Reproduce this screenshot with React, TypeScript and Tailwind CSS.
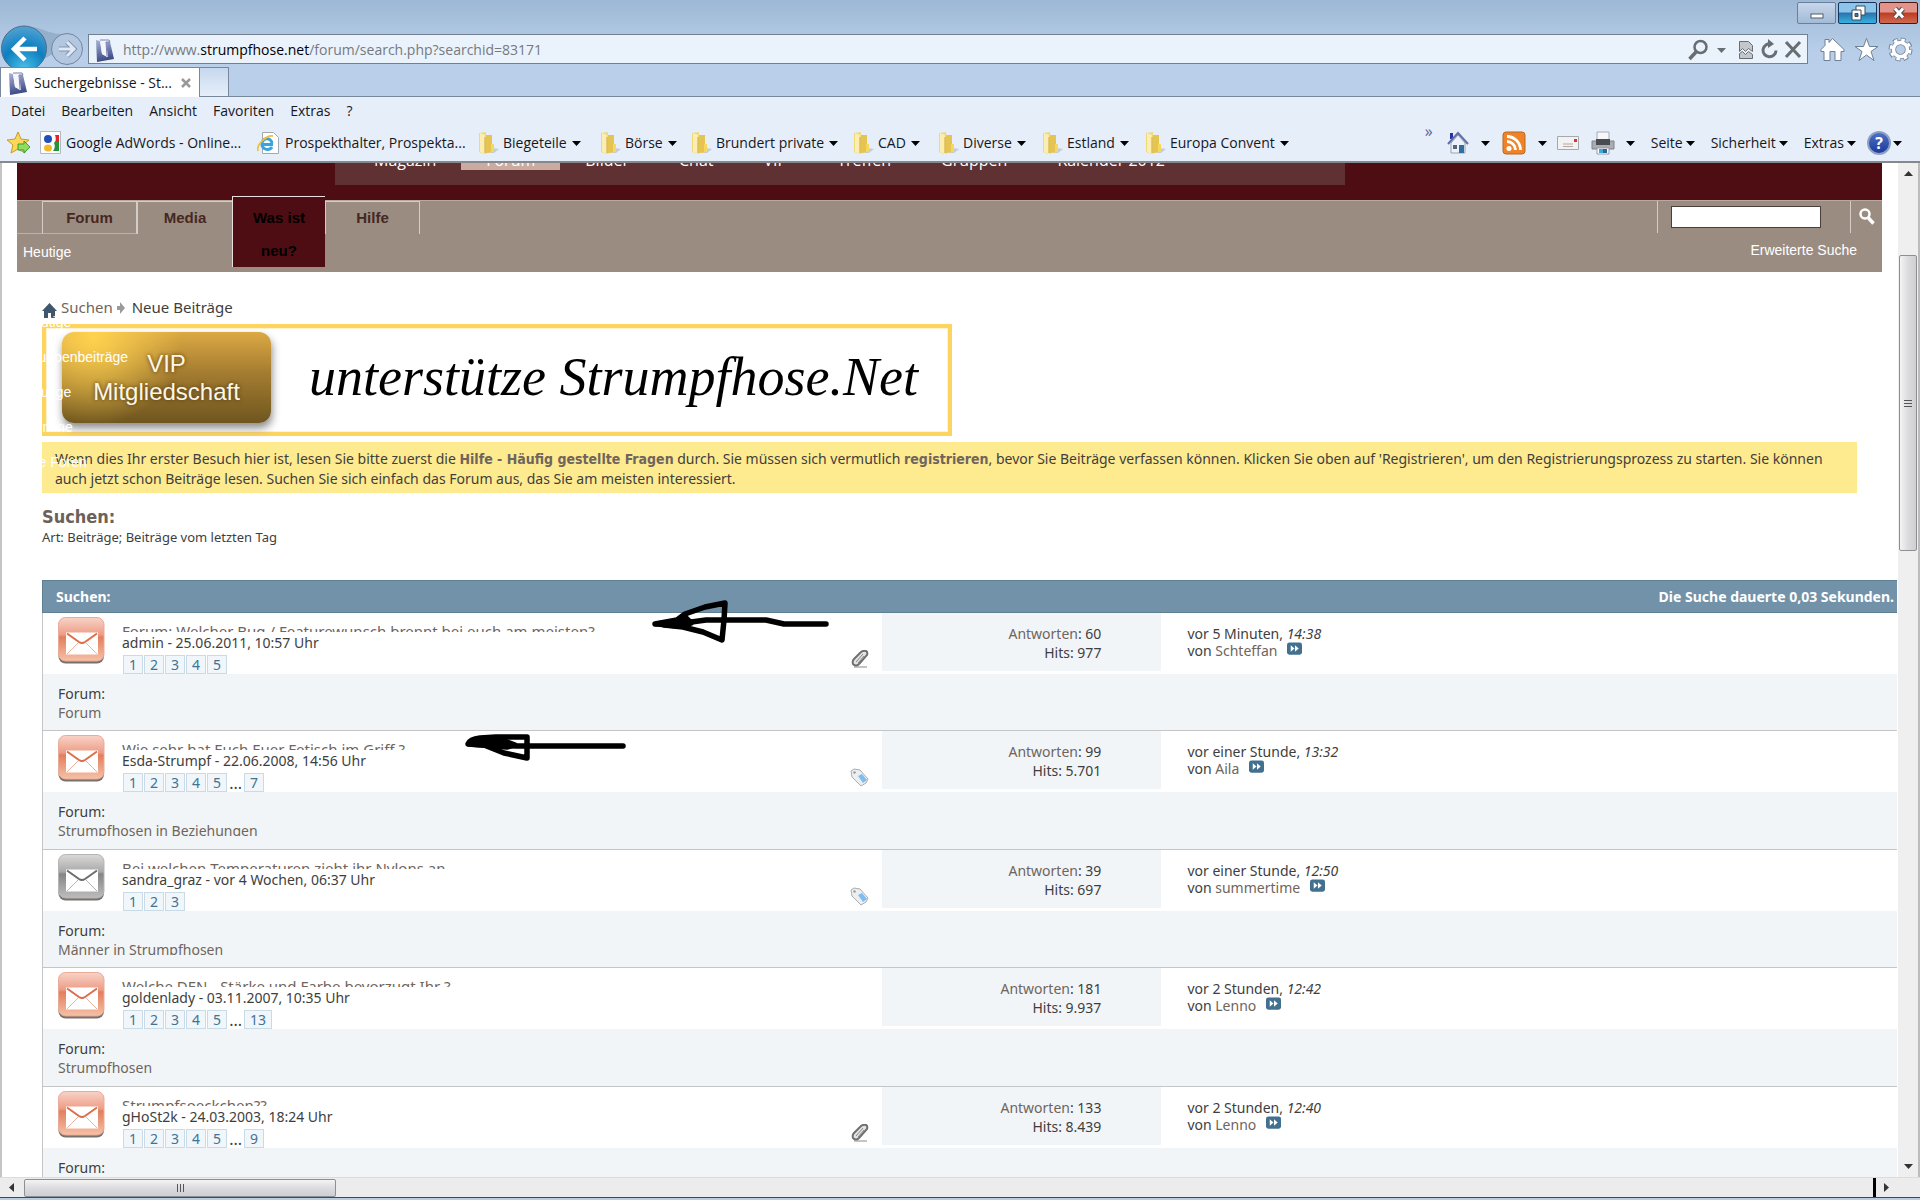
import type { ReactNode } from 'react'

type Thread = {
  title: string
  meta: string
  pages: string[]
  lastPage?: string
  read?: boolean
  marker?: 'clip' | 'tag'
  replies: string
  hits: string
  ago: string
  time: string
  by: string
  forum: string
}

const threads: Thread[] = [
  {
    title: 'Forum: Welcher Bug / Featurewunsch brennt bei euch am meisten?',
    meta: 'admin - 25.06.2011, 10:57 Uhr',
    pages: ['1', '2', '3', '4', '5'],
    marker: 'clip',
    replies: '60',
    hits: '977',
    ago: 'vor 5 Minuten,',
    time: '14:38',
    by: 'Schteffan',
    forum: 'Forum',
  },
  {
    title: 'Wie sehr hat Euch Euer Fetisch im Griff ?',
    meta: 'Esda-Strumpf - 22.06.2008, 14:56 Uhr',
    pages: ['1', '2', '3', '4', '5'],
    lastPage: '7',
    marker: 'tag',
    replies: '99',
    hits: '5.701',
    ago: 'vor einer Stunde,',
    time: '13:32',
    by: 'Aila',
    forum: 'Strumpfhosen in Beziehungen',
  },
  {
    title: 'Bei welchen Temperaturen zieht ihr Nylons an',
    meta: 'sandra_graz - vor 4 Wochen, 06:37 Uhr',
    pages: ['1', '2', '3'],
    read: true,
    marker: 'tag',
    replies: '39',
    hits: '697',
    ago: 'vor einer Stunde,',
    time: '12:50',
    by: 'summertime',
    forum: 'Männer in Strumpfhosen',
  },
  {
    title: 'Welche DEN - Stärke und Farbe bevorzugt Ihr ?',
    meta: 'goldenlady - 03.11.2007, 10:35 Uhr',
    pages: ['1', '2', '3', '4', '5'],
    lastPage: '13',
    replies: '181',
    hits: '9.937',
    ago: 'vor 2 Stunden,',
    time: '12:42',
    by: 'Lenno',
    forum: 'Strumpfhosen',
  },
  {
    title: 'Strumpfsoeckchen??',
    meta: 'gHoSt2k - 24.03.2003, 18:24 Uhr',
    pages: ['1', '2', '3', '4', '5'],
    lastPage: '9',
    marker: 'clip',
    replies: '133',
    hits: '8.439',
    ago: 'vor 2 Stunden,',
    time: '12:40',
    by: 'Lenno',
    forum: 'Strumpfhosen',
  },
]

const folders = [
  { name: 'Biegeteile', width: 'w-[122px]' },
  { name: 'Börse', width: 'w-[91px]' },
  { name: 'Brundert private', width: 'w-[162px]' },
  { name: 'CAD', width: 'w-[85px]' },
  { name: 'Diverse', width: 'w-[104px]' },
  { name: 'Estland', width: 'w-[103px]' },
  { name: 'Europa Convent', width: 'w-[150px]' },
]

const siteLinks = ['Magazin', 'Forum', 'Bilder', 'Chat', 'VIP', 'Treffen', 'Gruppen', 'Kalender 2012']
const subLinks = ['Heutige Beiträge', 'Heutige Gruppenbeiträge', 'Heutige Termine', 'Alle Foren']

function Caret() {
  return (
    <svg className="h-[5px] w-[9px] shrink-0" viewBox="0 0 9 5" aria-hidden="true">
      <path d="M0 0h9L4.500 5z" fill="#000" />
    </svg>
  )
}

function SiteIcon() {
  return (
    <svg className="h-6 w-5 shrink-0" viewBox="0 0 20 24" aria-hidden="true">
      <defs>
        <linearGradient id="site" x1="0" y1="0" x2="0.200" y2="1">
          <stop offset="0" stopColor="#aab3d8" />
          <stop offset="1" stopColor="#3c4a86" />
        </linearGradient>
      </defs>
      <path d="M1 2l4 1 2 13 5 3-2-15h5l4 17-17 3z" fill="url(#site)" />
      <path d="M5 2l9-1 1 2-4 1 2 15-6-3z" fill="#f4f6fc" />
      <path d="M5 2h9l1 2h-4l1 14" fill="none" stroke="#7a84b4" />
    </svg>
  )
}

function FolderIcon() {
  return (
    <svg className="h-6 w-[21px] shrink-0" viewBox="0 0 21 24" aria-hidden="true">
      <path d="M14 17l7 1-5 4H8z" fill="#aeb6c4" opacity="0.600" />
      <path d="M1 2l7-1v3l6 0v17l-8 2-5-2z" fill="#f0d978" />
      <path d="M8 4h6v17l-6 1z" fill="#e6c452" />
      <path d="M2 2l5 2v19l-5-2z" fill="#fbeeb0" />
      <path d="M7 6v16" stroke="#c9a63f" />
      <path d="M13 13h3v8h-3z" fill="#f6d95c" />
    </svg>
  )
}

function WindowButtons() {
  return (
    <div className="flex gap-0.5 pr-0.5">
      <button aria-label="Minimieren" className="flex h-[22px] w-[39px] items-center justify-center rounded-xs border border-[#67809f] bg-linear-to-b from-[#c8d7ea] via-[#b4c8e0] via-50% to-[#a3bbd7]">
        <svg className="h-5 w-5" viewBox="0 0 20 20">
          <rect x="4" y="11" width="12" height="4" fill="#fff" stroke="#525c6b" />
        </svg>
      </button>
      <button aria-label="Verkleinern" className="flex h-[22px] w-[39px] items-center justify-center rounded-xs border border-[#12365c] bg-linear-to-b from-[#8cc4ea] from-45% via-[#2a72ad] via-50% to-[#35b3e0]">
        <svg className="h-5 w-5" viewBox="0 0 20 20">
          <path d="M8 3h9v9h-9z" fill="#fff" stroke="#3b4a5e" />
          <path d="M4 7h9v10h-9z" fill="#fff" stroke="#3b4a5e" />
          <path d="M7 10.500h3v3h-3z" fill="#3a7cae" stroke="#3b4a5e" />
        </svg>
      </button>
      <button aria-label="Schließen" className="flex h-[22px] w-[39px] items-center justify-center rounded-xs border border-[#4b1512] bg-linear-to-b from-[#e2948a] from-45% via-[#bd3a22] via-50% to-[#cf6a50]">
        <svg className="h-5 w-5" viewBox="0 0 20 20">
          <path d="M6 5.500l8 9M14 5.500l-8 9" stroke="#4d4d4d" strokeWidth="5" />
          <path d="M6 5.500l8 9M14 5.500l-8 9" stroke="#fff" strokeWidth="3" />
        </svg>
      </button>
    </div>
  )
}

function AddressRow() {
  return (
    <div className="flex h-[42px] items-start">
      <button aria-label="Zurück und Vorwärts" className="h-[42px] w-[88px] shrink-0">
        <svg className="h-[42px] w-[88px]" viewBox="0 0 88 42">
          <defs>
            <radialGradient id="back" cx="0.500" cy="0.950" r="0.900">
              <stop offset="0" stopColor="#4cc0e8" />
              <stop offset="0.550" stopColor="#0d7fc0" />
              <stop offset="1" stopColor="#4b9fd0" />
            </radialGradient>
          </defs>
          <path d="M30 2c14 0 20 10 40 6l-12 18-14 8z" fill="#8fa9c6" opacity="0.800" />
          <circle cx="67" cy="24" r="15.500" fill="#b3c7e0" stroke="#72869f" />
          <path d="M59 24h14M67 17l7 7-7 7" fill="none" stroke="#8194ac" strokeWidth="5" />
          <path d="M59 24h14M67 17l7 7-7 7" fill="none" stroke="#dfe9f5" strokeWidth="3" />
          <circle cx="24" cy="23.500" r="22.500" fill="url(#back)" stroke="#4d6d8c" />
          <path d="M37 24H15M25 13L14 24l11 11" fill="none" stroke="#fff" strokeWidth="4.500" />
        </svg>
      </button>
      <div className="mt-[9px] flex h-[30px] min-w-0 flex-1 items-center border border-[#72808f] bg-[#eaf2fb] pl-[6px] pr-1 pt-px">
        <SiteIcon />
        <p className="ml-2 flex-1 text-sm text-[#757a80]">
          http://www.<span className="text-black">strumpfhose.net</span>/forum/search.php?searchid=83171
        </p>
        <svg className="h-6 w-[115px]" viewBox="0 0 115 24" fill="none" stroke="#686d72" aria-hidden="true">
          <circle cx="12.500" cy="9" r="6" strokeWidth="2.500" />
          <path d="M8 14l-6.500 7" strokeWidth="3.500" />
          <path d="M29 10h9l-4.500 5z" fill="#686d72" stroke="none" />
          <path d="M51.500 3.500h9l4 4v6l-4-3-3 3-3-3-3 3z" fill="#c3c7cb" />
          <path d="M51.500 20.500v-5l3-2 3 3 3-3 4 3v4z" fill="#c3c7cb" />
          <path d="M88 12.500a6.500 6.500 0 1 1-5-6.500" strokeWidth="3" />
          <path d="M80 1l6 5-6 4z" fill="#686d72" stroke="none" />
          <path d="M98 4l14 15M112 4L98 19" strokeWidth="3" />
        </svg>
      </div>
      <div className="mt-3 flex gap-[9px] pl-3 pr-[7px]">
        <svg className="h-[25px] w-[25px]" viewBox="0 0 25 24" fill="#fff" stroke="#6f7f94" aria-hidden="true">
          <path d="M1 12L5 8V2h4v3l3.500-4L24 12v2h-3v9h-6v-9h-5v9H4v-9H1z" />
        </svg>
        <svg className="h-[25px] w-[25px]" viewBox="0 0 25 24" fill="#fff" stroke="#6f7f94" aria-hidden="true">
          <path d="M12.500 1l3 8H24l-7 5 3 9-7.500-5.500L5 23l3-9-7-5h8.500z" />
        </svg>
        <svg className="h-[25px] w-[25px]" viewBox="0 0 25 24" aria-hidden="true">
          <circle cx="12.500" cy="12" r="9.500" fill="none" stroke="#6f7f94" strokeWidth="5" strokeDasharray="4.500 2.960" />
          <circle cx="12.500" cy="12" r="7" fill="none" stroke="#6f7f94" strokeWidth="5" />
          <circle cx="12.500" cy="12" r="9.500" fill="none" stroke="#fff" strokeWidth="3" strokeDasharray="3.500 3.960" strokeDashoffset="-0.500" />
          <circle cx="12.500" cy="12" r="7" fill="none" stroke="#fff" strokeWidth="3.500" />
        </svg>
      </div>
    </div>
  )
}

function BrowserHeader() {
  return (
    <header className="shrink-0 font-['Open_Sans','Noto_Sans',sans-serif] text-sm text-[#16181c]">
      <div className="bg-linear-to-b from-[#9db8d5] via-[#b9cfe9] via-55% to-[#bad0ea]">
        <div className="flex h-[25px] justify-end pt-0.5">
          <WindowButtons />
        </div>
        <AddressRow />
        <div className="flex h-[30px] border-b border-[#78889b]">
          <div className="flex h-[30px] w-[200px] items-center border border-b-0 border-[#78889b] bg-white pl-[7px]">
            <SiteIcon />
            <span className="ml-1.5 flex-1 whitespace-nowrap">Suchergebnisse - St...</span>
            <button aria-label="Tab schließen" className="mr-2">
              <svg className="h-[10px] w-[10px]" viewBox="0 0 10 10">
                <path d="M1 1l8 8M9 1L1 9" stroke="#999" strokeWidth="2.500" />
              </svg>
            </button>
          </div>
          <button aria-label="Neuer Tab" className="w-[29px] border border-b-0 border-l-0 border-[#78889b] bg-linear-to-b from-[#c6d8ee] to-[#e6effa]" />
        </div>
      </div>
      <div className="h-[66px] border-b-2 border-[#85888d] bg-[#e6eefa]">
        <nav className="flex h-[28px] items-center gap-4 px-[11px]">
          {['Datei', 'Bearbeiten', 'Ansicht', 'Favoriten', 'Extras', '?'].map((m) => (
            <button key={m}>{m}</button>
          ))}
        </nav>
        <div className="flex h-9 items-center whitespace-nowrap pl-[7px]">
          <svg className="h-6 w-6 shrink-0" viewBox="0 0 24 24" aria-hidden="true">
            <path d="M11 1l3 7 8 1-6 5 2 8-7-4-7 4 2-8-6-5 8-1z" fill="#fbd85a" stroke="#c99a2a" />
            <path d="M11 13h6v-3l6 6-6 6v-3h-6z" fill="#8fdc5f" stroke="#3f9a35" />
          </svg>
          <a href="#" className="ml-[9px] flex w-[217px] items-center gap-[5px]">
            <svg className="h-6 w-[21px] shrink-0" viewBox="0 0 21 24" aria-hidden="true">
              <path d="M.5.500h20v22H.5z" fill="#fff" stroke="#b5b9bf" />
              <path d="M11 4h8v7h-8z" fill="#e0252b" />
              <path d="M12 11h7v9h-8z" fill="#24933a" />
              <path d="M11 4h4q2 5-1 8 2 4-1 8h-5z" fill="#fff" />
              <ellipse cx="8" cy="8" rx="4" ry="4" fill="#1f4fb8" />
              <ellipse cx="8" cy="17" rx="4" ry="3.500" fill="#f2b92b" />
            </svg>
            Google AdWords - Online...
          </a>
          <a href="#" className="flex w-[221px] items-center gap-[6px]">
            <svg className="h-6 w-[22px] shrink-0" viewBox="0 0 22 24" aria-hidden="true">
              <path d="M5.500 1.500h11l5 5v16h-16z" fill="#fff" stroke="#a4a8ae" />
              <path d="M16 13.500H5a5 5 0 1 1 10-1.500M15 16a5.500 5.500 0 0 1-10-2" fill="none" stroke="#38a3dd" strokeWidth="3" />
              <path d="M1 20C-1 14 9 4 16 5" fill="none" stroke="#f0c03c" strokeWidth="1.800" />
            </svg>
            Prospekthalter, Prospekta...
          </a>
          {folders.map((f) => (
            <button key={f.name} className={`flex shrink-0 items-center ${f.width}`}>
              <FolderIcon />
              <span className="ml-1 mr-[5px]">{f.name}</span>
              <Caret />
            </button>
          ))}
          <span className="mb-6 ml-auto mr-[14px] text-base leading-4 text-[#5a6190]">»</span>
          <CommandBar />
        </div>
      </div>
    </header>
  )
}

function CommandBar() {
  return (
    <div className="flex items-center pr-[18px]">
      <button aria-label="Startseite" className="flex items-center gap-3">
        <svg className="h-6 w-[22px]" viewBox="0 0 22 24" aria-hidden="true">
          <path d="M3 2h3v6H3z" fill="#2533a8" />
          <path d="M4 12l7-8 7 8v10H4z" fill="#eef1f7" stroke="#9aa3b5" />
          <path d="M1 13L11 2l10 11" fill="none" stroke="#5f6fa8" strokeWidth="2" />
          <path d="M12 14h5v8h-5z" fill="#2f6f9f" />
          <path d="M6 14h4v4H6z" fill="#56647c" />
        </svg>
        <Caret />
      </button>
      <button aria-label="Feeds" className="ml-3 flex items-center gap-3">
        <svg className="h-6 w-6" viewBox="0 0 24 24" aria-hidden="true">
          <rect x="1" y="1" width="22" height="22" rx="3" fill="#ee8427" stroke="#b9681f" />
          <circle cx="7" cy="17.500" r="2.500" fill="#fff" />
          <path d="M5 10.500a8.500 8.500 0 0 1 8.500 8.500M5 5.500A13.500 13.500 0 0 1 18.500 19" fill="none" stroke="#fff" strokeWidth="2.800" />
        </svg>
        <Caret />
      </button>
      <button aria-label="E-Mail" className="ml-[10px]">
        <svg className="h-[18px] w-[22px]" viewBox="0 0 22 18" aria-hidden="true">
          <path d="M.5 2.500h21v13H.5z" fill="#f2f2f2" stroke="#a6a8ab" />
          <path d="M17 5h3v3h-3z" fill="#d5323a" />
          <path d="M6 10h10M6 12.500h10" stroke="#b3a9a4" />
        </svg>
      </button>
      <button aria-label="Drucken" className="ml-3 flex items-center gap-[11px]">
        <svg className="h-6 w-6" viewBox="0 0 24 24" aria-hidden="true">
          <path d="M6 1h12v9H6z" fill="#f7f7f7" stroke="#aab" />
          <path d="M1 10h22v8H1z" fill="#a9adb2" stroke="#7d8288" />
          <path d="M5 8h14v6H5z" fill="#484c52" />
          <path d="M6 17h12v6H6z" fill="#fff" stroke="#99a" />
          <path d="M8 18h4v4H8z" fill="#3fa9d8" />
          <path d="M12 18h4v4h-4z" fill="#276c8c" />
        </svg>
        <Caret />
      </button>
      {['Seite', 'Sicherheit', 'Extras'].map((m) => (
        <button key={m} className="ml-4 flex items-center gap-[3px]">
          {m}
          <Caret />
        </button>
      ))}
      <button aria-label="Hilfe" className="ml-[11px] flex items-center gap-0.5">
        <span className="flex h-6 w-6 items-center justify-center rounded-full border-2 border-[#8ea0c4] bg-linear-to-b from-[#4d6fc4] to-[#1b3c9c] text-base font-bold leading-5 text-white">?</span>
        <Caret />
      </button>
    </div>
  )
}

function SiteNav() {
  return (
    <div className="ml-[15px] mr-4">
      <div className="h-[37px] bg-[#4e0d12] pl-[318px]">
        <nav className="flex h-[22px] w-[1010px] bg-[#5f3133] pl-[14px] font-['Open_Sans','Noto_Sans',sans-serif] text-base leading-5 text-white">
          {siteLinks.map((l) => (
            <a key={l} href="#" className={`flex h-[7px] items-end overflow-hidden whitespace-nowrap px-[25px] ${l === 'Forum' ? 'bg-[#cbaa9f]' : ''}`}>
              {l}
            </a>
          ))}
        </nav>
      </div>
      <div className="flex h-[72px] items-start border-t border-[#bba9a0] bg-[#9b8c82] font-['Liberation_Sans',sans-serif]">
        <span className="h-[33px] w-[25px] border-b border-[#bfb1a8]" />
        <nav className="flex items-start text-center text-[15px] font-bold leading-[33px] text-[#452821]">
          <a href="#" className="h-[33px] w-[95px] border border-[#d5ccc8] border-b-[#bfb1a8]"><span className="block -mt-px">Forum</span></a>
          <a href="#" className="h-[33px] w-[95px] border-l border-t border-[#d5ccc8]"><span className="block -mt-px">Media</span></a>
          <a href="#" className="-mt-[5px] w-[93px] border-l border-t border-[#e8dfe0] bg-[#4e0d12] px-3 pt-1 text-black">Was ist neu?</a>
          <a href="#" className="h-[33px] w-[95px] border-x border-t border-[#d5ccc8]"><span className="block -mt-px">Hilfe</span></a>
        </nav>
        <form className="ml-auto w-[225px]" onSubmit={(e) => e.preventDefault()}>
          <div className="flex h-8 items-start border-l border-[#d5ccc8] pt-[5px]">
            <input aria-label="Suche" className="ml-[13px] h-[22px] w-[150px] border border-[#4a403b] bg-white px-1 text-sm" />
            <button aria-label="Suchen" className="-mt-[5px] ml-auto flex h-8 w-8 items-center justify-center border-l border-[#d5ccc8]">
              <svg className="h-[18px] w-[18px]" viewBox="0 0 18 18" fill="none" stroke="#fff" aria-hidden="true">
                <circle cx="7" cy="6" r="4.500" strokeWidth="2.500" />
                <path d="M10.500 10l5 5.500" strokeWidth="3.500" />
              </svg>
            </button>
          </div>
          <a href="#" className="mr-[25px] mt-[7px] block text-right text-sm text-white">Erweiterte Suche</a>
        </form>
      </div>
    </div>
  )
}

function VipBanner() {
  return (
    <a href="#" className="mt-[5px] flex h-28 w-[910px] items-start border-4 border-[#fdd45f] bg-white ring-1 ring-inset ring-[#fff3cd]">
      <span className="ml-4 mt-1 flex h-[91px] w-[209px] flex-col items-center justify-center rounded-xl bg-[radial-gradient(circle_at_15%_5%,#ffd24f_0%,#ffc64e00_45%),linear-gradient(#dca943,#a47c31_45%,#6f561f)] font-['Liberation_Sans',sans-serif] text-2xl leading-[28px] text-[#fdf6e4] shadow-[1px_5px_8px_#8a8a8a] [text-shadow:0_0_4px_#4a3510]">
        <span>VIP</span>
        <span>Mitgliedschaft</span>
      </span>
      <span className="ml-[38px] mt-[11px] whitespace-nowrap font-['Liberation_Serif',serif] text-[54px] italic leading-[76px] text-black">unterstütze Strumpfhose.Net</span>
    </a>
  )
}

function MailIcon({ read }: { read?: boolean }) {
  const id = read ? 'mail-read' : 'mail-new'
  const edge = read ? '#6c6c6c' : '#dd6c48'
  return (
    <svg className="ml-[15px] mt-1 h-[47px] w-[47px] shrink-0" viewBox="0 0 47 47" aria-hidden="true">
      <defs>
        <linearGradient id={id} x1="0" y1="0" x2="0" y2="1">
          <stop offset="0" stopColor={read ? '#d9d9d9' : '#f9d3c8'} />
          <stop offset="0.400" stopColor={read ? '#a9a9a9' : '#ec9c85'} />
          <stop offset="0.450" stopColor={read ? '#858585' : '#e27e5d'} />
          <stop offset="1" stopColor={read ? '#bdbdbd' : '#f6c1a6'} />
        </linearGradient>
      </defs>
      <rect x="0.500" y="3" width="45.500" height="43.500" rx="7" fill="#77706c" />
      <rect x="0.500" y="0.500" width="45.500" height="43.500" rx="7" fill={`url(#${id})`} stroke={read ? '#b5b5b5' : '#e9aa98'} />
      <rect x="8" y="15.500" width="32" height="22" fill="#fff" />
      <path d="M9 37l11-11M39 37L28 26" stroke={edge} opacity="0.500" />
      <path d="M9 16.500l12 8.500q3 2 6 0l12-8.500" fill="none" stroke={edge} strokeWidth="2" />
    </svg>
  )
}

function Marker({ kind }: { kind: 'clip' | 'tag' }) {
  if (kind === 'clip') {
    return (
      <svg className="h-[18px] w-[18px]" viewBox="0 0 18 18" fill="none" aria-label="Anhang">
        <path d="M3 17h13" stroke="#c4c4c4" strokeWidth="2" />
        <path d="M2 14q-1-3 1-5l7-7q3-2 5-1t1 4l-8 9q-3 3-6 0z" fill="#e3e3e3" stroke="#6f6f6f" strokeWidth="2" />
        <path d="M5 12l7-8M7 13l6-7" stroke="#888" />
      </svg>
    )
  }
  return (
    <svg className="h-[19px] w-[19px]" viewBox="0 0 19 19" aria-label="Stichwörter">
      <path d="M1 3l3-2 6 1 8 9-2 4-5 3-9-9z" fill="#eceef0" stroke="#a9adb1" />
      <path d="M8 8l4-2 5 6-4 3z" fill="#7fbdf0" />
      <circle cx="4.500" cy="4.500" r="1.200" fill="#999" />
    </svg>
  )
}

function PageLink({ children }: { children: ReactNode }) {
  return (
    <a href="#" className="flex h-[19px] min-w-5 items-center justify-center border border-[#c9dbe6] bg-[#f0f6fa] px-[5px] leading-4 text-[#417394]">
      {children}
    </a>
  )
}

function ThreadRow({ t }: { t: Thread }) {
  return (
    <li className="flex h-[118px] flex-col border-b border-l border-[#c3c5c7] even:h-[119px]">
      <div className="grid h-[61px] shrink-0 grid-cols-[839fr_280fr_736fr] bg-white">
        <div className="flex">
          <MailIcon read={t.read} />
          <div className="ml-[17px] flex-1 pt-[9px]">
            <a href="#" className="block h-[10px] overflow-hidden text-[15px] leading-[18px] text-[#6f655c]">{t.title}</a>
            <p className="leading-[22px]">{t.meta}</p>
            <div className="mt-px flex gap-px pl-px">
              {t.pages.map((p) => (
                <PageLink key={p}>{p}</PageLink>
              ))}
              {t.lastPage && (
                <>
                  <span className="w-[15px] text-center text-base leading-5">...</span>
                  <PageLink>{t.lastPage}</PageLink>
                </>
              )}
            </div>
          </div>
          <div className="mr-[13px] mt-[37px]">{t.marker && <Marker kind={t.marker} />}</div>
        </div>
        <dl className="h-[58px] bg-[#f1f5f8] pr-[60px] pt-[11px] text-right leading-[19px]">
          <div><dt className="inline text-[#6f655c]">Antworten</dt><dd className="inline">: {t.replies}</dd></div>
          <div><dt className="inline">Hits: </dt><dd className="inline">{t.hits}</dd></div>
        </dl>
        <div className="pl-[26px] pt-3 leading-[17px]">
          <p>{t.ago} <em>{t.time}</em></p>
          <p className="flex items-start">
            von&nbsp;<a href="#" className="text-[#6f655c]">{t.by}</a>
            <svg className="ml-[10px] h-[14px] w-[15px]" viewBox="0 0 16 14" aria-label="Zum letzten Beitrag">
              <rect width="16" height="13" rx="2.500" fill="#42708f" />
              <path d="M4 3l4 3.500L4 10zM8.500 3l4 3.500-4 3.500z" fill="#fff" />
            </svg>
          </p>
        </div>
      </div>
      <div className="flex-1 bg-[#f1f5f8] pl-[15px] pt-[10px] leading-[19px]">
        <p>Forum:</p>
        <a href="#" className="block h-[15px] overflow-hidden text-[#6f655c]">{t.forum}</a>
      </div>
    </li>
  )
}

// hand-drawn markup over the result list
function Scribbles() {
  return (
    <svg className="pointer-events-none absolute left-0 top-0 h-[200px] w-[800px]" viewBox="42 579 800 200" fill="none" stroke="#000" strokeWidth="5.500" strokeLinecap="round" strokeLinejoin="round" aria-hidden="true">
      <path d="M655 623l22-4 8-6 20-7 20-4-1 17-2 20-19-8-20-5-19-2M662 622l22 0 22-3 60 0 18 4h42" />
      <path d="M657 623l22-3 6-4 6 6-12 3z" fill="#000" />
      <path d="M468 743q2-5 12-6l16-1 31 0v21l-23-5-20-8zM482 742l34 3h107" />
      <path d="M469 743l14-5h16l16 6-8 2z" fill="#000" />
    </svg>
  )
}

function VerticalScroll() {
  return (
    <div className="flex w-[22px] shrink-0 flex-col items-center border-r-2 border-[#bcbcbc] bg-[#efefef]">
      <svg className="my-2 h-[5px] w-[9px]" viewBox="0 0 9 5"><path d="M0 5h9L4.500 0z" fill="#333" /></svg>
      <div className="mt-[71px] flex h-[296px] w-[18px] flex-col items-center justify-center gap-0.5 rounded-xs border border-[#8d8f93] bg-linear-to-r from-[#f4f4f4] via-[#dcdcdf] via-50% to-[#cfcfd3]">
        <span className="h-px w-2 bg-[#555]" />
        <span className="h-px w-2 bg-[#555]" />
        <span className="h-px w-2 bg-[#555]" />
      </div>
      <svg className="mb-2 mt-auto h-[5px] w-[9px]" viewBox="0 0 9 5"><path d="M0 0h9L4.500 5z" fill="#333" /></svg>
    </div>
  )
}

function HorizontalScroll() {
  return (
    <div className="flex h-5 shrink-0 items-center border-t border-[#dcdcdc] bg-[#ececec] pl-[9px]">
      <svg className="h-[9px] w-[5px]" viewBox="0 0 5 9"><path d="M5 0v9L0 4.500z" fill="#333" /></svg>
      <div className="ml-[10px] flex h-[18px] w-[312px] items-center justify-center gap-0.5 rounded-xs border border-[#8d8f93] bg-linear-to-b from-[#f4f4f4] via-[#dcdcdf] via-50% to-[#cfcfd3]">
        <span className="h-2 w-px bg-[#555]" />
        <span className="h-2 w-px bg-[#555]" />
        <span className="h-2 w-px bg-[#555]" />
      </div>
      <span className="ml-auto mr-2 h-full w-[3px] bg-black" />
      <svg className="mr-[31px] h-[9px] w-[5px]" viewBox="0 0 5 9"><path d="M0 0v9l5-4.500z" fill="#333" /></svg>
    </div>
  )
}

export default function App() {
  return (
    <div className="flex h-screen flex-col overflow-hidden bg-white">
      <BrowserHeader />
      <div className="flex min-h-0 flex-1">
        <main className="relative min-w-0 flex-1 overflow-hidden border-l-2 border-[#c4c4c4] font-['Noto_Sans',sans-serif] text-sm text-[#3e3e3e]">
          <SiteNav />
          <ul className="absolute left-[21px] top-[72px] w-[110px] font-['Liberation_Sans',sans-serif] text-sm leading-[35px] text-white">
            {subLinks.map((l) => (
              <li key={l} className={l === 'Alle Foren' ? '' : 'w-[60px]'}><a href="#">{l}</a></li>
            ))}
          </ul>
          <div className="pl-10 pr-px pt-[25px]">
            <nav className="flex h-[22px] items-center text-[15px]">
              <svg className="mr-1 mt-1 h-[15px] w-[15px]" viewBox="0 0 15 15" aria-hidden="true">
                <path d="M7.500 0L15 8h-2v7H9v-5H6v5H2V8H0z" fill="#40566d" />
              </svg>
              <a href="#" className="text-[#6f655c]">Suchen</a>
              <svg className="ml-1 mr-[7px] h-3 w-2" viewBox="0 0 8 12" aria-hidden="true">
                <path d="M0 4h3V0l5 6-5 6V8H0z" fill="#9a9a9a" />
              </svg>
              <span>Neue Beiträge</span>
            </nav>
            <VipBanner />
            <p className="mr-10 mt-[6px] bg-[#feea8f] px-[13px] pb-[5px] pt-[7px] leading-[19px]">
              Wenn dies Ihr erster Besuch hier ist, lesen Sie bitte zuerst die{' '}
              <a href="#" className="font-['DejaVu_Sans_Condensed',sans-serif] font-bold text-[#6f655c]">Hilfe - Häufig gestellte Fragen</a> durch. Sie müssen sich vermutlich{' '}
              <a href="#" className="font-['DejaVu_Sans_Condensed',sans-serif] font-bold text-[#6f655c]">registrieren</a>, bevor Sie Beiträge verfassen können. Klicken Sie oben auf
              'Registrieren', um den Registrierungsprozess zu starten. Sie können auch jetzt schon Beiträge lesen. Suchen Sie sich
              einfach das Forum aus, das Sie am meisten interessiert.
            </p>
            <h1 className="mt-3 font-['DejaVu_Sans_Condensed',sans-serif] text-lg font-bold leading-6 text-[#6b6158]">Suchen:</h1>
            <p className="text-[13px] leading-4">Art: Beiträge; Beiträge vom letzten Tag</p>
            <section className="relative mt-[35px]">
              <h2 className="flex h-[33px] items-center justify-between border border-r-0 border-[#5f7f93] bg-[#7292a9] pl-[13px] pr-[3px] font-bold text-white">
                <span>Suchen:</span>
                <span>Die Suche dauerte 0,03 Sekunden.</span>
              </h2>
              <ol>
                {threads.map((t) => (
                  <ThreadRow key={t.title} t={t} />
                ))}
              </ol>
              <Scribbles />
            </section>
          </div>
        </main>
        <VerticalScroll />
      </div>
      <HorizontalScroll />
      <div className="h-[3px] shrink-0 border-t border-[#3d4a58] bg-[#b9cde2]" />
    </div>
  )
}
